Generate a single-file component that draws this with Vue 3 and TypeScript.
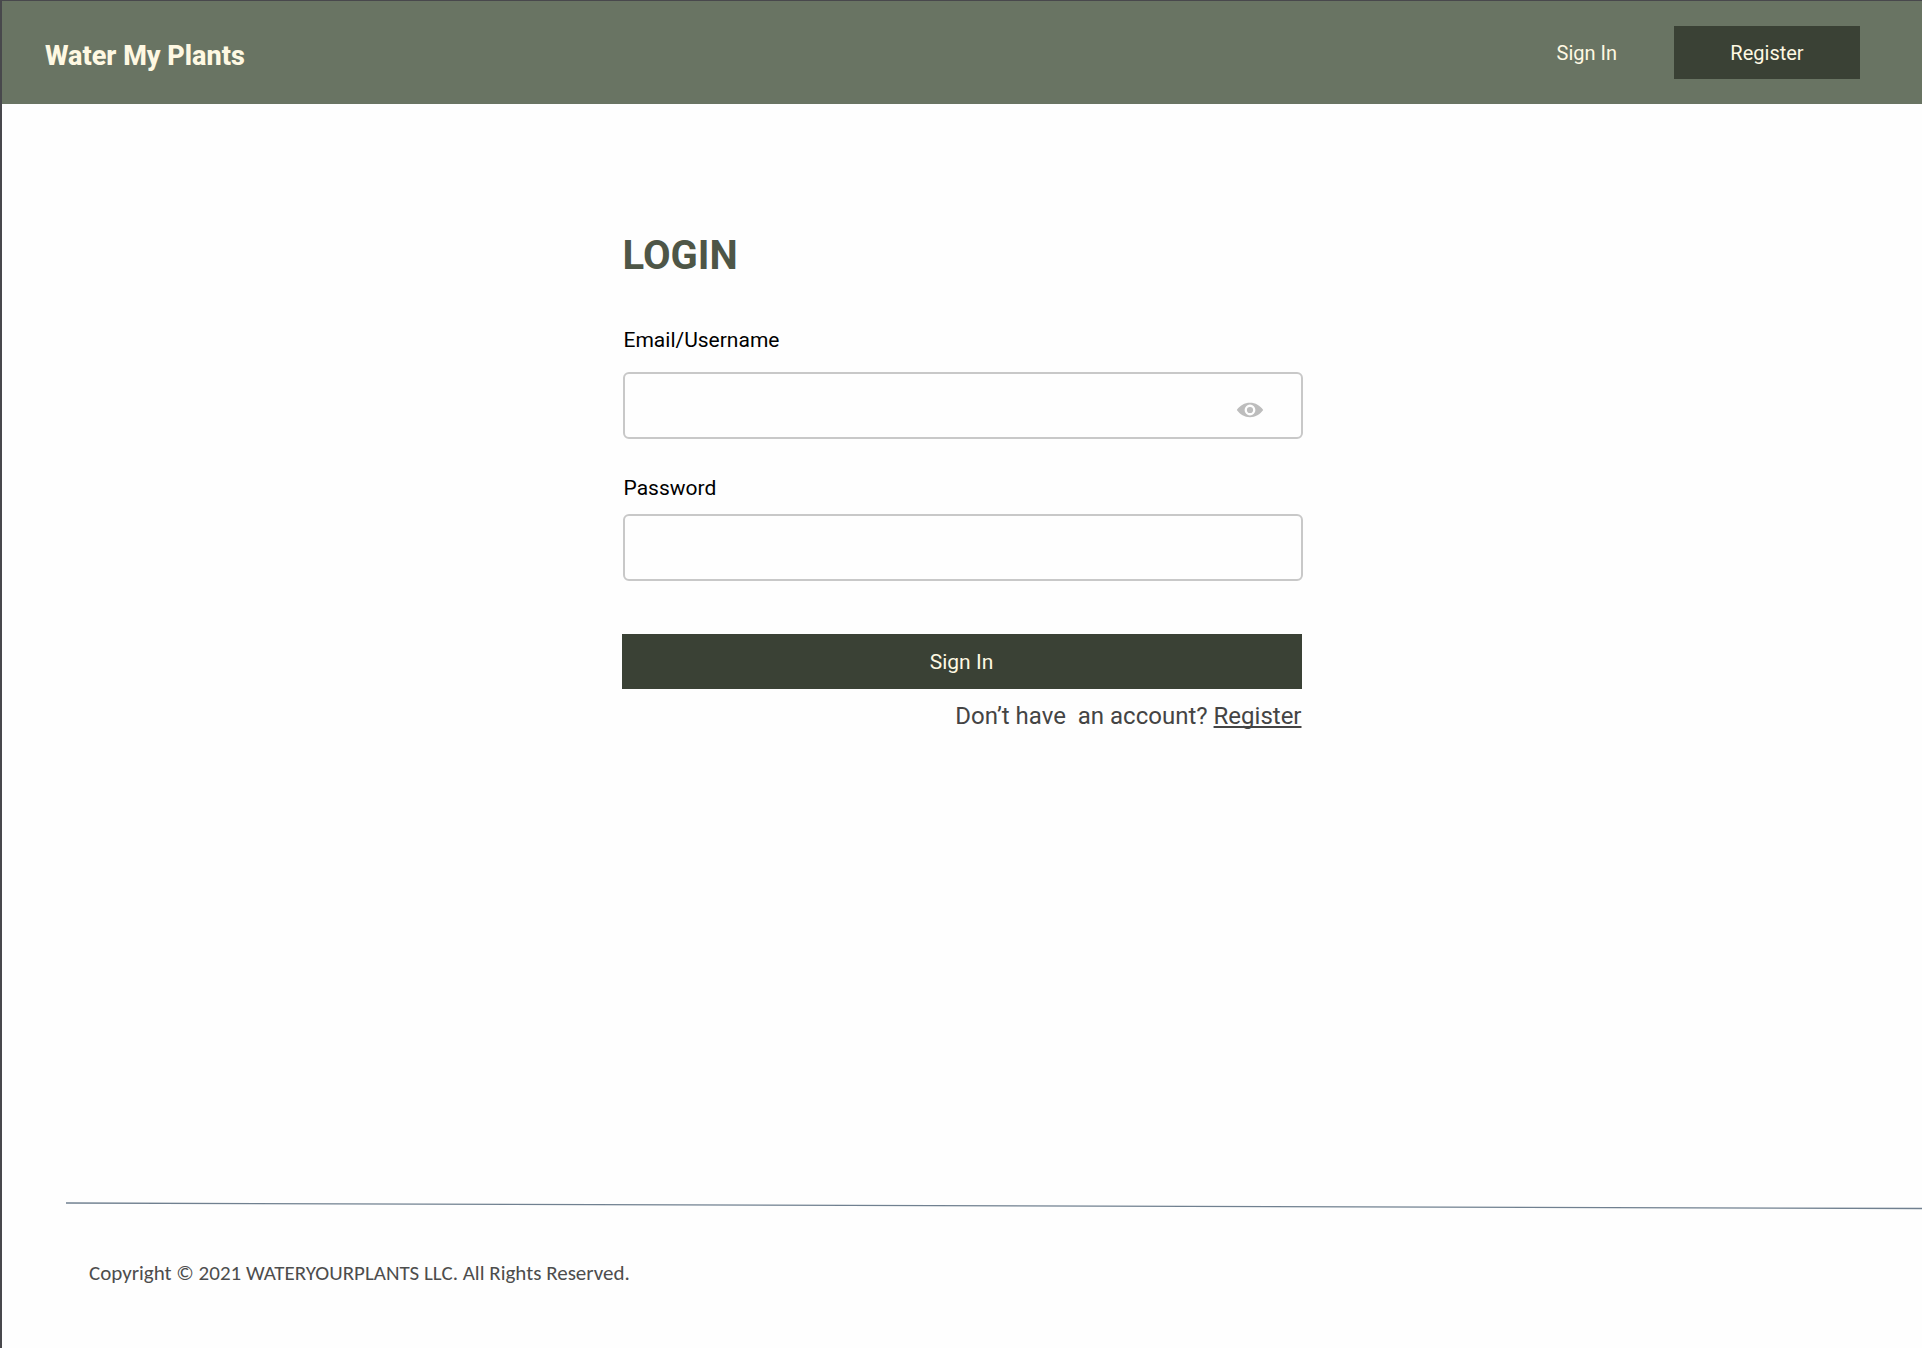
<script setup lang="ts">
import { ref } from 'vue'

const username = ref('')
const password = ref('')
const masked = ref(false)
</script>

<template>
  <div class="page">
    <header class="topbar">
      <h2 class="brand">Water My Plants</h2>
      <nav class="nav">
        <a class="nav-link" href="#signin">Sign In</a>
        <button class="nav-button" type="button">Register</button>
      </nav>
    </header>

    <main class="main">
      <form class="login" @submit.prevent>
        <h1 class="heading">LOGIN</h1>

        <div class="field">
          <label class="label" for="username">Email/Username</label>
          <div class="control first">
            <input id="username" v-model="username" class="input" :type="masked ? 'password' : 'text'" />
            <button class="eye" type="button" aria-label="Toggle visibility" @click="masked = !masked">
              <svg width="28" height="16" viewBox="0 0 28 16" aria-hidden="true">
                <path
                  fill="#bdbdbd"
                  fill-rule="evenodd"
                  d="M.8 8C4 3.500 8.500 .8 14 .8S24 3.500 27.200 8C24 12.500 19.500 15.200 14 15.200S4 12.500 .8 8ZM14 2.600a5.400 5.400 0 1 0 0 10.800a5.400 5.400 0 0 0 0-10.800ZM14 4.900a3.100 3.100 0 1 1 0 6.200a3.100 3.100 0 0 1 0-6.200Z"
                />
              </svg>
            </button>
          </div>
        </div>

        <div class="field">
          <label class="label" for="password">Password</label>
          <div class="control">
            <input id="password" v-model="password" class="input" type="password" />
          </div>
        </div>

        <button class="submit" type="submit">Sign In</button>
        <p class="prompt">Don’t have&nbsp; an account? <a class="prompt-link" href="#register">Register</a></p>
      </form>
    </main>

    <footer class="footer">
      <svg class="rule" viewBox="0 0 1856 8" preserveAspectRatio="none" aria-hidden="true">
        <line x1="0" y1="1" x2="1856" y2="6.500" stroke="#708090" stroke-width="1.3" />
      </svg>
      <p class="copyright">Copyright © 2021 WATERYOURPLANTS LLC. All Rights Reserved.</p>
    </footer>
  </div>
</template>

<style>
body {
  background: #fefefe;
}
</style>

<style scoped>
.page {
  box-sizing: border-box;
  min-height: 100vh;
  display: flex;
  flex-direction: column;
  border-top: 1px solid #48484c;
  border-left: 2px solid #48484c;
  background: #fefefe;
  font-family: Roboto, sans-serif;
}

.page * {
  box-sizing: border-box;
}

.topbar {
  display: flex;
  justify-content: space-between;
  align-items: center;
  padding: 25px 62px 25px 43px;
  background: #697463;
}

.brand {
  margin: 0;
  padding-top: 6px;
  color: #fef8e2;
  font-size: 27px;
  font-weight: 800;
  line-height: 32px;
}

.nav {
  display: flex;
  align-items: center;
  gap: 57px;
}

.nav-link {
  color: #fef8e2;
  font-size: 20px;
  line-height: 24px;
  text-decoration: none;
}

.nav-button,
.submit {
  border: 0;
  padding: 0;
  background: #3a4135;
  color: #fef8e2;
  font-family: inherit;
}

.nav-button {
  width: 186px;
  height: 53px;
  font-size: 20px;
}

.main {
  flex: 1;
  display: flex;
  justify-content: center;
  align-items: flex-start;
}

.login {
  width: 681px;
  max-width: 100%;
  padding-top: 128px;
}

.heading {
  margin: 0 0 46px 1px;
  color: #4e5647;
  font-size: 40px;
  font-weight: 700;
  line-height: 48px;
}

.field {
  display: flex;
  flex-direction: column;
  margin: 0 0 35px 1px;
}

.label {
  padding-left: 1px;
  color: #000;
  font-size: 21px;
  line-height: 28px;
}

.control {
  display: flex;
  align-items: center;
  height: 67px;
  margin-top: 12px;
  border: 2px solid #c8c8c8;
  border-radius: 6px;
}

.control.first {
  margin-top: 18px;
}

.input {
  flex: 1;
  min-width: 0;
  height: 100%;
  border: 0;
  padding: 0 20px;
  outline: none;
  background: transparent;
  font-family: inherit;
  font-size: 21px;
}

.eye {
  display: flex;
  border: 0;
  padding: 8px 0 0;
  margin-right: 37px;
  background: none;
}

.submit {
  display: block;
  width: calc(100% - 1px);
  height: 55px;
  margin-top: 53px;
  font-size: 21px;
}

.prompt {
  margin: 12px 1px 0 0;
  color: #444;
  font-size: 24px;
  line-height: 30px;
  text-align: right;
}

.prompt-link {
  color: inherit;
  text-decoration-thickness: 2px;
  text-underline-offset: 2px;
  text-decoration-skip-ink: none;
}

.footer {
  padding-left: 64px;
}

.rule {
  display: block;
  width: 100%;
  height: 8px;
}

.copyright {
  margin: 51px 0 63px 23px;
  color: #4d4d4d;
  font-family: Carlito, Lato, sans-serif;
  font-size: 21px;
  line-height: 24px;
}
</style>
